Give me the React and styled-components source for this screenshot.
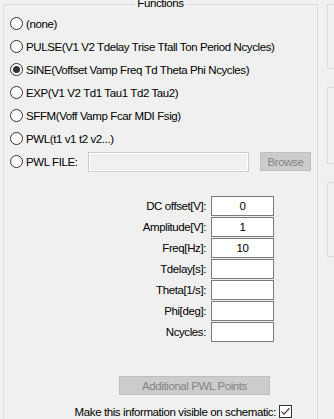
import React from 'react';
import styled, { createGlobalStyle } from 'styled-components';

const GlobalStyle = createGlobalStyle`
body {
  margin: 0;
  background: #f0f0f0;
  font-family: "Liberation Sans", Arial, sans-serif;
  font-size: 11.5px;
  letter-spacing: -0.4px;
  color: #000;
  overflow: hidden;
}
`;

const Page = styled.div`
display: flex;
align-items: flex-start;
width: 334px;
height: 419px;
padding-left: 3px;
box-sizing: border-box;
overflow: hidden;
`;

const Group = styled.div`
position: relative;
flex: 0 0 315px;
height: 440px;
margin-top: 4px;
border: 1px solid #dcdcdc;
box-sizing: border-box;
`;

const Legend = styled.span`
position: absolute;
top: -8px;
left: 0;
right: 0;
margin: 0 auto;
width: fit-content;
padding: 0 2px;
background: #f0f0f0;
line-height: 13px;
`;

const SidePanels = styled.div`
display: flex;
flex-direction: column;
gap: 18px;
margin-left: 9px;
margin-top: 4px;
`;

const SidePanel = styled.div`
width: 40px;
height: ${p => p.h}px;
border: 1px solid #dcdcdc;
border-right: none;
box-sizing: border-box;
`;

const RadioList = styled.div`
display: flex;
flex-direction: column;
padding: 7px 0 0 6px;
`;

const RadioRow = styled.label`
display: flex;
align-items: center;
height: 23px;
`;

const Circle = styled.span`
position: relative;
flex: 0 0 13px;
width: 13px;
height: 13px;
margin-right: 3px;
border: 1px solid #333;
border-radius: 50%;
background: #fff;
box-sizing: border-box;
&::after {
  content: '';
  display: ${p => (p.checked ? 'block' : 'none')};
  position: absolute;
  left: 2px;
  top: 2px;
  width: 7px;
  height: 7px;
  border-radius: 50%;
  background: #333;
}
`;

const FileLabel = styled.span`
width: 62px;
`;

const FileInput = styled.div`
width: 161px;
height: 20px;
border: 1px solid #cccccc;
box-shadow: inset 0 0 0 1px #fff;
box-sizing: border-box;
background: #f0f0f0;
`;

const DisabledButton = styled.div`
display: flex;
align-items: center;
justify-content: center;
width: ${p => p.w}px;
height: ${p => p.h}px;
margin-left: ${p => p.ml}px;
border: 1px solid #bfbfbf;
background: #cccccc;
color: #838383;
box-sizing: border-box;
`;

const Params = styled.div`
display: grid;
grid-template-columns: 202px 63px;
column-gap: 5px;
row-gap: 1px;
margin-top: 23px;
`;

const ParamLabel = styled.span`
text-align: right;
line-height: 20px;
`;

const ParamBox = styled.div`
height: 20px;
border: 1px solid #7a7a7a;
background: #fff;
box-sizing: border-box;
text-align: center;
line-height: 18px;
`;

const BottomArea = styled.div`
display: flex;
flex-direction: column;
margin-top: 34px;
`;

const CheckRow = styled.div`
display: flex;
align-items: center;
justify-content: flex-end;
gap: 3px;
margin-top: 10px;
margin-right: 25px;
`;

const CheckBox = styled.span`
display: flex;
align-items: center;
justify-content: center;
width: 13px;
height: 13px;
border: 1px solid #333;
background: #fff;
box-sizing: border-box;
`;

const radios = [
  '(none)',
  'PULSE(V1 V2 Tdelay Trise Tfall Ton Period Ncycles)',
  'SINE(Voffset Vamp Freq Td Theta Phi Ncycles)',
  'EXP(V1 V2 Td1 Tau1 Td2 Tau2)',
  'SFFM(Voff Vamp Fcar MDI Fsig)',
  'PWL(t1 v1 t2 v2...)',
];

const params = [
  ['DC offset[V]:', '0'],
  ['Amplitude[V]:', '1'],
  ['Freq[Hz]:', '10'],
  ['Tdelay[s]:', ''],
  ['Theta[1/s]:', ''],
  ['Phi[deg]:', ''],
  ['Ncycles:', ''],
];

const App = () => (
  <Page>
    <GlobalStyle />
    <Group>
      <Legend>Functions</Legend>
      <RadioList>
        {radios.map(text => (
          <RadioRow key={text}>
            <Circle checked={text.startsWith('SINE')} />
            {text}
          </RadioRow>
        ))}
        <RadioRow>
          <Circle />
          <FileLabel>PWL FILE:</FileLabel>
          <FileInput />
          <DisabledButton w={51} h={19} ml={11}>Browse</DisabledButton>
        </RadioRow>
      </RadioList>
      <Params>
        {params.map(([label, value]) => (
          <React.Fragment key={label}>
            <ParamLabel>{label}</ParamLabel>
            <ParamBox>{value}</ParamBox>
          </React.Fragment>
        ))}
      </Params>
      <BottomArea>
        <DisabledButton w={151} h={19} ml={115}>Additional PWL Points</DisabledButton>
        <CheckRow>
          Make this information visible on schematic:
          <CheckBox>
            <svg width="11" height="11" viewBox="0 0 11 11">
              <path d="M1.5 5.5 L4 8.2 L9.5 2.2" fill="none" stroke="#333" strokeWidth="1.1" />
            </svg>
          </CheckBox>
        </CheckRow>
      </BottomArea>
    </Group>
    <SidePanels>
      <SidePanel h={65} />
      <SidePanel h={77} />
      <SidePanel h={75} />
    </SidePanels>
  </Page>
);

export default App;
